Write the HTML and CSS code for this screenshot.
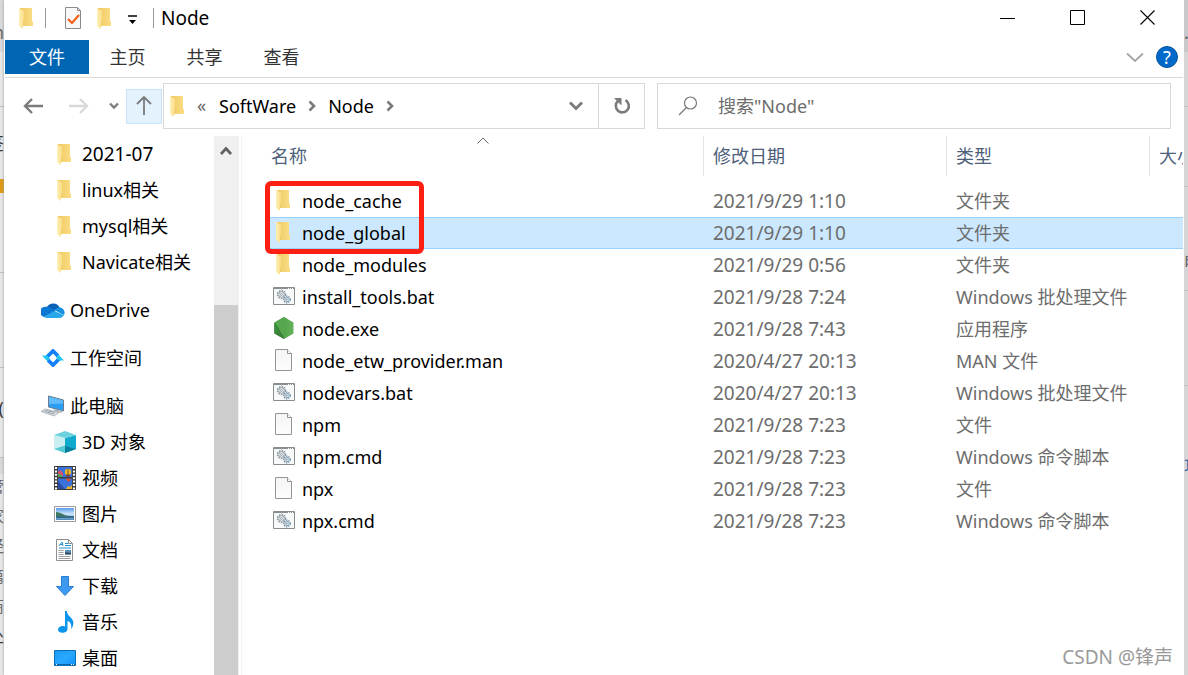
FILE: index.html
```html
<!DOCTYPE html>
<html lang="zh-CN">
<head>
<meta charset="utf-8">
<meta name="viewport" content="width=device-width, initial-scale=1">
<title>Node</title>
<link rel="stylesheet" href="styles.css">
</head>
<body>
<svg class="defs" aria-hidden="true">
  <defs>
    <linearGradient id="gFold" x1="0" x2="1"><stop offset="0" stop-color="#fff0b8"/><stop offset="1" stop-color="#f9dc85"/></linearGradient>
    <linearGradient id="gBack" x1="0" x2="1"><stop offset="0" stop-color="#efca62"/><stop offset="1" stop-color="#fbdd85"/></linearGradient>
    <linearGradient id="gScreen" x1="0" y1="0" x2="1" y2="1"><stop offset="0" stop-color="#1b9af5"/><stop offset=".5" stop-color="#29a8ff"/><stop offset="1" stop-color="#0c93f7"/></linearGradient>
    <linearGradient id="gPaper" x1="0" y1="0" x2="0" y2="1"><stop offset="0" stop-color="#f3f4f4"/><stop offset="1" stop-color="#fdfdfd"/></linearGradient>
    <linearGradient id="gNode" x1="0" x2="1"><stop offset="0" stop-color="#3b8a3d"/><stop offset=".45" stop-color="#4ea34a"/><stop offset="1" stop-color="#66b35c"/></linearGradient>
    <linearGradient id="gSky" x1="0" y1="0" x2="0" y2="1"><stop offset="0" stop-color="#5a9bea"/><stop offset=".5" stop-color="#cfe6fa"/><stop offset="1" stop-color="#4a86b8"/></linearGradient>
  </defs>
  <symbol id="folder" viewBox="0 0 22 22">
    <path d="M4 1h12v13l1 .5V19H4z" fill="url(#gBack)"/>
    <path d="M3 1l5 3v10l-1 1v7l-4-3z" fill="url(#gFold)"/>
  </symbol>
  <symbol id="file" viewBox="0 0 22 22">
    <path d="M2.500.5h12l4 4v17h-16z" fill="url(#gPaper)" stroke="#929596"/>
    <path d="M14.500.5v4h4" fill="#fff" stroke="#929596"/>
  </symbol>
  <symbol id="script" viewBox="0 0 22 22">
    <path d="M.5 2.500h21v17H.5z" fill="#f7f8f8" stroke="#888d91"/>
    <path d="M1 3h20" stroke="#888d91" stroke-width="2"/>
    <path d="M15 3.500h1m1 0h1m1 0h1" stroke="#fff"/>
    <g fill="none" stroke="#8c99a3">
      <circle cx="8.500" cy="9.500" r="4" stroke-width="1.500" stroke-dasharray="1.600 1"/><circle cx="8.500" cy="9.500" r="2.800"/><circle cx="8.500" cy="9.500" r="1"/>
      <circle cx="14" cy="14.500" r="3.200" stroke-width="1.400" stroke-dasharray="1.400 .9" stroke="#7b98aa"/><circle cx="14" cy="14.500" r="2.200" stroke="#8baabd"/><circle cx="14" cy="14.500" r=".7"/>
    </g>
  </symbol>
  <symbol id="nodejs" viewBox="0 0 22 22">
    <path d="M11 0l9.500 5.500v11L11 22l-9.500-5.500v-11z" fill="url(#gNode)"/>
    <path d="M1.500 5.500L11 19.500V22l-9.500-5.500z" fill="#397f3a"/>
    <path d="M1.500 5.500L11 0l3 1.700L11 20z" fill="#55a64d"/>
    <path d="M1.500 5.500L7 13 3 17.300l-1.500-.8z" fill="#388a3c"/>
  </symbol>
  <symbol id="onedrive" viewBox="0 0 24 16">
    <path d="M6 5a7 7 0 0 1 12.500.5L12 9z" fill="#0a62b8"/>
    <path d="M5 4.800a5.500 5.500 0 0 1 5 1.300L15 9 3 15A5.200 5.200 0 0 1 5 4.800z" fill="#0a78d4"/>
    <path d="M13 8l5-2.700A5.400 5.400 0 0 1 23 13z" fill="#1490df"/>
    <path d="M3 15l10-6 10 4a5 5 0 0 1-4 3H5a5 5 0 0 1-2-1z" fill="#28a8ea"/>
  </symbol>
  <symbol id="workspace" viewBox="0 0 22 18">
    <path d="M3.500 9.500L11 2l5 5" fill="none" stroke="#1380f8" stroke-width="3.800"/>
    <path d="M18.500 8.500L11 16l-5-5" fill="none" stroke="#1380f8" stroke-width="3.800"/>
    <path d="M0 6.500h5l3 3-2.700 2.700zM22 11.500h-5l-3-3 2.700-2.700z" fill="#22c7ee"/>
  </symbol>
  <symbol id="computer" viewBox="0 0 24 22">
    <path d="M7.500 1l15 4v11l-15-4z" fill="#2b9ff4" stroke="#6a7c8d"/>
    <path d="M8 1.700l14 3.700v3L8 9z" fill="#62bbfc"/>
    <path d="M13 14l4 1 5 1-2 2-7-2z" fill="#aeb8c0"/>
    <path d="M4 14l14 3.500-5 3.500L0 16.500z" fill="#d7dce0" stroke="#9da6ae" stroke-width=".7"/>
    <path d="M3 16l10 3M5 15l9 2.500M7 18l3-2" stroke="#8e989f" stroke-width=".7"/>
  </symbol>
  <symbol id="cube" viewBox="0 0 22 22">
    <path d="M0 4l11 3v15L0 18z" fill="#c9eff0"/><path d="M22 4L11 7v15l11-4z" fill="#12a9cf"/>
    <path d="M0 4l11-4 11 4-11 3z" fill="#6bd2dd"/><path d="M0 18l11-3.500V22z" fill="#55cad5"/><path d="M11 15l11 3-11 4z" fill="#087e9d"/>
  </symbol>
  <symbol id="film" viewBox="0 0 22 24">
    <path d="M0 0h22v24H0z" fill="#3b3b3b"/>
    <path d="M2 1v23M20 1v23" stroke="#fff" stroke-width="2.200" stroke-dasharray="2 1.400"/>
    <path d="M4 1h14v10H4zM4 12.500h14V23H4z" fill="#3a72db"/>
    <path d="M4 6l2-2 3 3v3H4z" fill="#d9536a"/><path d="M4 8l4 1v2H4z" fill="#4fa84b"/>
    <circle cx="14" cy="6" r="3.200" fill="#e9b72d"/><path d="M14 3v6M12.500 9h3v1h-3z" stroke="#7c3325" stroke-width=".8" fill="#a43325"/>
    <path d="M12 12.500h5l-1.500 3h-2z" fill="#d74a2c"/><path d="M4 15l7 8H4z" fill="#2a4da7"/><path d="M12 23l2-3 2 1 2-2v4z" fill="#efb62c"/>
  </symbol>
  <symbol id="picture" viewBox="0 0 22 16">
    <path d="M.5.5h21v15H.5z" fill="#fff" stroke="#9b9b9b"/><path d="M2 2h18v12H2z" fill="url(#gSky)"/>
    <path d="M2 6c5 0 8 4 14 4l4 1H2z" fill="#3f7a60"/><path d="M2 10h18v2H2z" fill="#356c83"/>
  </symbol>
  <symbol id="document" viewBox="0 0 22 22">
    <path d="M2.500.5h12l4 4v17h-16z" fill="#fff" stroke="#8d8f90"/><path d="M14.500.5v4h4" fill="none" stroke="#8d8f90"/>
    <path d="M5 7l3-4 1 4M6 5.500h3M11 4.500h3M11 6.500h6M5 9h12" fill="none" stroke="#248fd2"/>
    <path d="M4.500 11.500h5M4.500 13.500h5M4.500 15.500h5M4.500 17.500h12M4.500 19.500h12" stroke="#9da0a2"/>
    <path d="M11 11h6v4.500h-6z" fill="#5d8dbb"/><path d="M11 13l6 1v1.500h-6z" fill="#2f4f66"/>
  </symbol>
  <symbol id="download" viewBox="0 0 22 22"><path d="M7.500 1.500h7v10h5L11 20.500 2.500 11.500h5z" fill="#3d9af0" stroke="#2a7ccc"/></symbol>
  <symbol id="music" viewBox="0 0 22 22">
    <path d="M11 0h2c0 6 7 6 6.300 13-.3 2.700-1 3.800-2.300 5 1-5-1-7.500-3.500-8v8c0 5-9.500 5-9.500.800 0-3.500 4-4.300 7-3.300z" fill="#0d95ee"/>
  </symbol>
  <symbol id="desktop" viewBox="0 0 22 16">
    <path d="M.5.5h21v15H.5z" fill="url(#gScreen)" stroke="#086fb8"/><path d="M1 14.500h20" stroke="#0866a8"/><path d="M2 14.500h1m14 0h1m1 0h1" stroke="#fff"/>
  </symbol>
</svg>

<div class="desktop">
  <div class="edge edge-left" aria-hidden="true">
    <span class="strip shade">n</span><span class="strip rule tall"></span><span class="strip ink">签</span><span class="strip orange"></span>
    <span class="strip rule long"></span><span class="strip rule gap"></span><span class="strip rule ink mid">(</span><span class="strip shade low"></span>
    <span class="strip small">管</span><span class="strip small">家</span><span class="strip small">经</span><span class="strip small">篇</span><span class="strip small">商</span><span class="strip small ink">处</span>
  </div>

  <div class="window">
    <header class="titlebar">
      <svg class="icon"><use href="#folder"/></svg>
      <span class="bar"></span>
      <button class="quick" aria-label="属性"><svg class="icon" viewBox="0 0 22 22"><path d="M3.500.5h12l3 3v18h-15z" fill="#f8f8f8" stroke="#8b8b8b"/><path d="M15.500.5v3h3" fill="none" stroke="#8b8b8b"/><path d="M6 12l4 4 7-8" fill="none" stroke="#f45f16" stroke-width="2.200"/></svg></button>
      <button class="quick" aria-label="新建文件夹"><svg class="icon"><use href="#folder"/></svg></button>
      <button class="quick narrow" aria-label="自定义快速访问工具栏"><svg width="10" height="10" viewBox="0 0 10 10"><path d="M0 1h9" stroke="#000" stroke-width="1.500"/><path d="M1 5h7L4.500 9z"/></svg></button>
      <span class="bar last"></span>
      <h1 class="title">Node</h1>
      <div class="controls">
        <button class="control" aria-label="最小化"><svg width="16" height="16"><path d="M0 8.500h15" stroke="#000"/></svg></button>
        <button class="control" aria-label="最大化"><svg width="16" height="16"><path d="M.5.5h14v14H.5z" fill="none" stroke="#000"/></svg></button>
        <button class="control" aria-label="关闭"><svg width="16" height="16"><path d="M.5.5l14 14m0-14l-14 14" stroke="#000" stroke-width="1.100"/></svg></button>
      </div>
    </header>

    <nav class="tabs">
      <button class="tab active">文件</button><button class="tab">主页</button><button class="tab">共享</button><button class="tab">查看</button>
      <div class="help">
        <button class="plain" aria-label="展开功能区"><svg width="18" height="11"><path d="M1 1.500l8 7.500 8-7.500" fill="none" stroke="#a5a5a5" stroke-width="1.800"/></svg></button>
        <button class="question" aria-label="帮助">?</button>
      </div>
    </nav>

    <div class="navbar">
      <button class="arrow" aria-label="后退"><svg width="20" height="16"><path d="M9 1L2 8l7 7M2 8h18" fill="none" stroke="#7b7b7b" stroke-width="2.400"/></svg></button>
      <button class="arrow" aria-label="前进"><svg width="20" height="16"><path d="M11 1l7 7-7 7M18 8H0" fill="none" stroke="#d9d9d9" stroke-width="2.400"/></svg></button>
      <button class="recent" aria-label="最近位置"><svg width="10" height="8"><path d="M1 1.500L5 5.500l4-4" fill="none" stroke="#7b7b7b" stroke-width="2.400"/></svg></button>
      <button class="up" aria-label="上移"><svg width="18" height="20"><path d="M2 8l7-7 7 7M9 1v18" fill="none" stroke="#7b7b7b" stroke-width="1.800"/></svg></button>
      <div class="address">
        <svg class="icon"><use href="#folder"/></svg>
        <span class="chevrons">«</span>
        <a class="crumb" href="#software">SoftWare</a>
        <svg width="8" height="12"><path d="M1.500 1.500L6 6l-4.500 4.500" fill="none" stroke="#7b7b7b" stroke-width="2.600"/></svg>
        <a class="crumb" href="#node">Node</a>
        <svg width="8" height="12"><path d="M1.500 1.500L6 6l-4.500 4.500" fill="none" stroke="#7b7b7b" stroke-width="2.600"/></svg>
        <button class="drop" aria-label="以前的位置"><svg width="14" height="10"><path d="M1 1.500L7 7.500l6-6" fill="none" stroke="#7b7b7b" stroke-width="2.800"/></svg></button>
        <button class="refresh" aria-label="刷新"><svg width="18" height="18"><path d="M12.500 3.200A6.500 6.500 0 1 1 5 4" fill="none" stroke="#7b7b7b" stroke-width="2.600"/><path d="M1 1h7.500v7.500z" fill="#7b7b7b"/></svg></button>
      </div>
      <label class="search">
        <svg width="20" height="20"><circle cx="12.500" cy="7" r="6" fill="none" stroke="#777" stroke-width="1.200"/><path d="M8.500 11.500L1 19" stroke="#777" stroke-width="1.300"/></svg>
        <input class="search-box" type="text" placeholder='搜索"Node"' aria-label='搜索"Node"'>
      </label>
    </div>

    <div class="content">
      <aside class="sidebar">
        <ul class="tree nested">
          <li><a class="figures" href="#a"><svg class="icon"><use href="#folder"/></svg>2021-07</a></li>
          <li><a href="#b"><svg class="icon"><use href="#folder"/></svg>linux相关</a></li>
          <li><a href="#c"><svg class="icon"><use href="#folder"/></svg>mysql相关</a></li>
          <li><a href="#d"><svg class="icon"><use href="#folder"/></svg>Navicate相关</a></li>
        </ul>
        <ul class="tree"><li><a href="#e"><svg class="icon wide"><use href="#onedrive"/></svg>OneDrive</a></li></ul>
        <ul class="tree"><li><a href="#f"><svg class="icon wide short"><use href="#workspace"/></svg>工作空间</a></li></ul>
        <div>
          <ul class="tree"><li><a href="#g"><svg class="icon wide"><use href="#computer"/></svg>此电脑</a></li></ul>
          <ul class="tree nested">
            <li><a href="#h"><svg class="icon"><use href="#cube"/></svg>3D 对象</a></li>
            <li><a href="#i"><svg class="icon tall"><use href="#film"/></svg>视频</a></li>
            <li><a href="#j"><svg class="icon"><use href="#picture"/></svg>图片</a></li>
            <li><a href="#k"><svg class="icon"><use href="#document"/></svg>文档</a></li>
            <li><a href="#l"><svg class="icon"><use href="#download"/></svg>下载</a></li>
            <li><a href="#m"><svg class="icon"><use href="#music"/></svg>音乐</a></li>
            <li><a href="#n"><svg class="icon"><use href="#desktop"/></svg>桌面</a></li>
          </ul>
        </div>
      </aside>
      <div class="scrollbar">
        <button class="scroll-up" aria-label="向上滚动"><svg width="12" height="10"><path d="M1 8l5-5.500L11 8" fill="none" stroke="#606060" stroke-width="2.800"/></svg></button>
        <div class="thumb"></div>
      </div>
      <main class="files">
        <svg class="sort" width="12" height="7"><path d="M.5 6.500L6 1l5.500 5.500" fill="none" stroke="#666"/></svg>
        <table class="list">
          <colgroup><col><col class="c-date"><col class="c-type"><col class="c-size"></colgroup>
          <thead><tr><th>名称</th><th>修改日期</th><th>类型</th><th>大小</th></tr></thead>
          <tbody>
            <tr><td><svg class="icon"><use href="#folder"/></svg>node_cache</td><td class="figures">2021/9/29 1:10</td><td>文件夹</td><td></td></tr>
            <tr class="selected"><td><svg class="icon"><use href="#folder"/></svg>node_global</td><td class="figures">2021/9/29 1:10</td><td>文件夹</td><td></td></tr>
            <tr><td><svg class="icon"><use href="#folder"/></svg>node_modules</td><td class="figures">2021/9/29 0:56</td><td>文件夹</td><td></td></tr>
            <tr><td><svg class="icon"><use href="#script"/></svg>install_tools.bat</td><td class="figures">2021/9/28 7:24</td><td>Windows 批处理文件</td><td></td></tr>
            <tr><td><svg class="icon"><use href="#nodejs"/></svg>node.exe</td><td class="figures">2021/9/28 7:43</td><td>应用程序</td><td></td></tr>
            <tr><td><svg class="icon"><use href="#file"/></svg>node_etw_provider.man</td><td class="figures">2020/4/27 20:13</td><td>MAN 文件</td><td></td></tr>
            <tr><td><svg class="icon"><use href="#script"/></svg>nodevars.bat</td><td class="figures">2020/4/27 20:13</td><td>Windows 批处理文件</td><td></td></tr>
            <tr><td><svg class="icon"><use href="#file"/></svg>npm</td><td class="figures">2021/9/28 7:23</td><td>文件</td><td></td></tr>
            <tr><td><svg class="icon"><use href="#script"/></svg>npm.cmd</td><td class="figures">2021/9/28 7:23</td><td>Windows 命令脚本</td><td></td></tr>
            <tr><td><svg class="icon"><use href="#file"/></svg>npx</td><td class="figures">2021/9/28 7:23</td><td>文件</td><td></td></tr>
            <tr><td><svg class="icon"><use href="#script"/></svg>npx.cmd</td><td class="figures">2021/9/28 7:23</td><td>Windows 命令脚本</td><td></td></tr>
          </tbody>
        </table>
        <div class="highlight"></div>
        <p class="watermark">CSDN @锋声</p>
      </main>
    </div>
  </div>

  <div class="edge edge-right" aria-hidden="true">
    <span class="strip shade">.</span><span class="strip rule tall"></span><span class="strip rule long"></span><span class="strip ink">所</span><span class="strip rule"></span><span class="strip rule gap"></span><span class="strip blue">项</span>
  </div>
</div>
</body>
</html>
```
FILE: styles.css
```css
* { box-sizing: border-box; }

body {
  margin: 0;
  overflow: hidden;
  color: #000;
  font: 18px/24px "Noto Sans", "Noto Sans CJK SC", sans-serif;
}

button {
  display: flex;
  align-items: center;
  justify-content: center;
  padding: 0;
  border: 0;
  background: none;
  color: inherit;
  font: inherit;
}

a { color: inherit; text-decoration: none; }

.defs { position: absolute; width: 0; height: 0; }

.icon { flex: none; width: 22px; height: 22px; }
.icon.wide { width: 24px; }
.icon.short { height: 18px; }
.icon.tall { height: 24px; }
.figures { font-size: 19px; }

.desktop {
  display: grid;
  grid-template-columns: 4px minmax(0, 1fr) 4px;
  height: 100vh;
}

/* Slivers of the page behind the window */
.edge { overflow: hidden; background: #e8e8e8; color: #666; }
.edge-right { background: #d6d6d6; }
.strip { display: flex; justify-content: flex-end; height: 24px; overflow: hidden; }
.edge-right .strip { justify-content: flex-start; }
.strip.shade { height: 52px; padding-top: 20px; background: #d9dadc; }
.edge-right .shade { background: #c8c8ca; }
.strip.rule { border-bottom: 1px solid #c2c2c2; }
.strip.tall { height: 55px; }
.strip.long { height: 80px; }
.strip.gap { height: 95px; }
.strip.mid { height: 90px; padding-top: 28px; }
.edge-left .strip.ink { color: #333; }
.edge-left .strip.ink:not(.rule):not(.small) { height: 72px; padding-top: 24px; }
.strip.orange { height: 14px; background: #e29a12; }
.strip.low { height: 16px; padding: 0; }
.strip.small { height: 30px; font-size: 16px; }
.edge-right .strip.ink { height: 80px; padding-top: 64px; }
.strip.blue { height: 120px; padding-top: 68px; color: #326ca5; }

.window {
  display: flex;
  flex-direction: column;
  min-height: 0;
  height: 100vh;
  padding: 0 1px;
  background: #fff;
  box-shadow: 0 0 3px #999;
}

.titlebar { display: flex; flex: none; align-items: center; height: 40px; padding: 0 0 4px 11px; }
.bar { width: 1px; height: 20px; margin: 0 11px 0 7px; background: #999; }
.bar.last { margin: 0 7px 0 8px; }
.quick { width: 32px; height: 24px; }
.quick.narrow { width: 24px; padding-top: 4px; }
.title { margin: 0; font-size: 19px; font-weight: 400; }
.controls { display: flex; margin-left: auto; }
.control { width: 70px; height: 36px; }

.tabs { display: flex; flex: none; height: 38px; padding-bottom: 3px; border-bottom: 1px solid #dadada; color: #333; }
.tab { width: 77px; height: 34px; }
.tab.active { width: 84px; background: #0066b4; color: #fff; }
.help { display: flex; align-items: center; gap: 12px; margin-left: auto; padding-right: 5px; }
.question {
  width: 22px;
  height: 22px;
  border: 1px solid #07539a;
  border-radius: 50%;
  background: #0069c9;
  color: #fff;
  line-height: 20px;
}

.navbar { display: flex; flex: none; align-items: center; height: 58px; padding: 5px 12px 7px 5px; }
.arrow { width: 46px; height: 34px; }
.recent { width: 24px; height: 34px; }
.up { width: 36px; height: 35px; margin-right: 1px; border: 1px solid #c9e4fa; background: #e4f2fe; }
.address {
  display: flex;
  flex: 477 1 0;
  align-items: center;
  height: 46px;
  border: 1px solid #d9d9d9;
  padding-left: 3px;
}
.chevrons { width: 30px; padding: 0 0 2px 8px; color: #666; }
.crumb { margin-right: 12px; }
svg + .crumb { margin-left: 12px; }
.drop { width: 44px; height: 44px; margin-left: auto; }
.refresh { width: 46px; height: 44px; border-left: 1px solid #d9d9d9; }
.search {
  display: flex;
  flex: 492 1 0;
  align-items: center;
  gap: 20px;
  height: 46px;
  margin-left: 12px;
  padding-left: 20px;
  border: 1px solid #d9d9d9;
}
.search-box { flex: 1; min-width: 0; padding: 0; border: 0; outline: 0; background: none; font: inherit; }
.search-box::placeholder { color: #6d6d6d; opacity: 1; }

.content {
  display: grid;
  flex: 1;
  grid-template-columns: 209px 25px minmax(0, 1fr);
  min-height: 0;
}

.sidebar { display: flex; flex-direction: column; gap: 12px; overflow: hidden; }
.tree { margin: 0; padding: 0 0 0 36px; list-style: none; }
.tree.nested { padding-left: 49px; }
.tree a { display: flex; align-items: center; gap: 6px; height: 36px; white-space: nowrap; }
.tree .wide { margin-right: -1px; }

.scrollbar { overflow: hidden; background: #f0f0f0; }
.scroll-up { width: 24px; height: 30px; }
.thumb { height: 100%; margin: 139px 1px 0 0; background: #cdcdcd; }

.files { position: relative; margin-left: 2px; padding-left: 24px; border-left: 1px solid #f3f3f3; overflow: hidden; }
.list { width: 100%; border-collapse: separate; border-spacing: 0; table-layout: fixed; white-space: nowrap; }
.c-date { width: 243px; }
.c-type { width: 203px; }
.c-size { width: 34px; }
.list th {
  height: 40px;
  padding: 0 0 0 9px;
  border-left: 1px solid #e5e5e5;
  color: #4c607a;
  font-weight: 400;
  text-align: left;
  overflow: hidden;
}
.list th:first-child { padding-left: 5px; border-left: 0; }
.list tbody::before { display: block; height: 9px; content: ""; }
.list td { height: 32px; padding: 0 0 0 10px; color: #6d6d6d; }
.list td:first-child { padding-left: 7px; color: #000; }
.list td .icon { margin-right: 7px; vertical-align: top; }
.selected td { border: solid #99d1ff; border-width: 1px 0; background: #cce8ff; }

.sort { position: absolute; top: 1px; left: 235px; }
.highlight {
  position: absolute;
  top: 45px;
  left: 23px;
  width: 159px;
  height: 73px;
  border: 5px solid #fc1f12;
  border-radius: 6px;
}
.watermark { position: absolute; right: 10px; bottom: 6px; margin: 0; color: #999; font-size: 19px; }
```
